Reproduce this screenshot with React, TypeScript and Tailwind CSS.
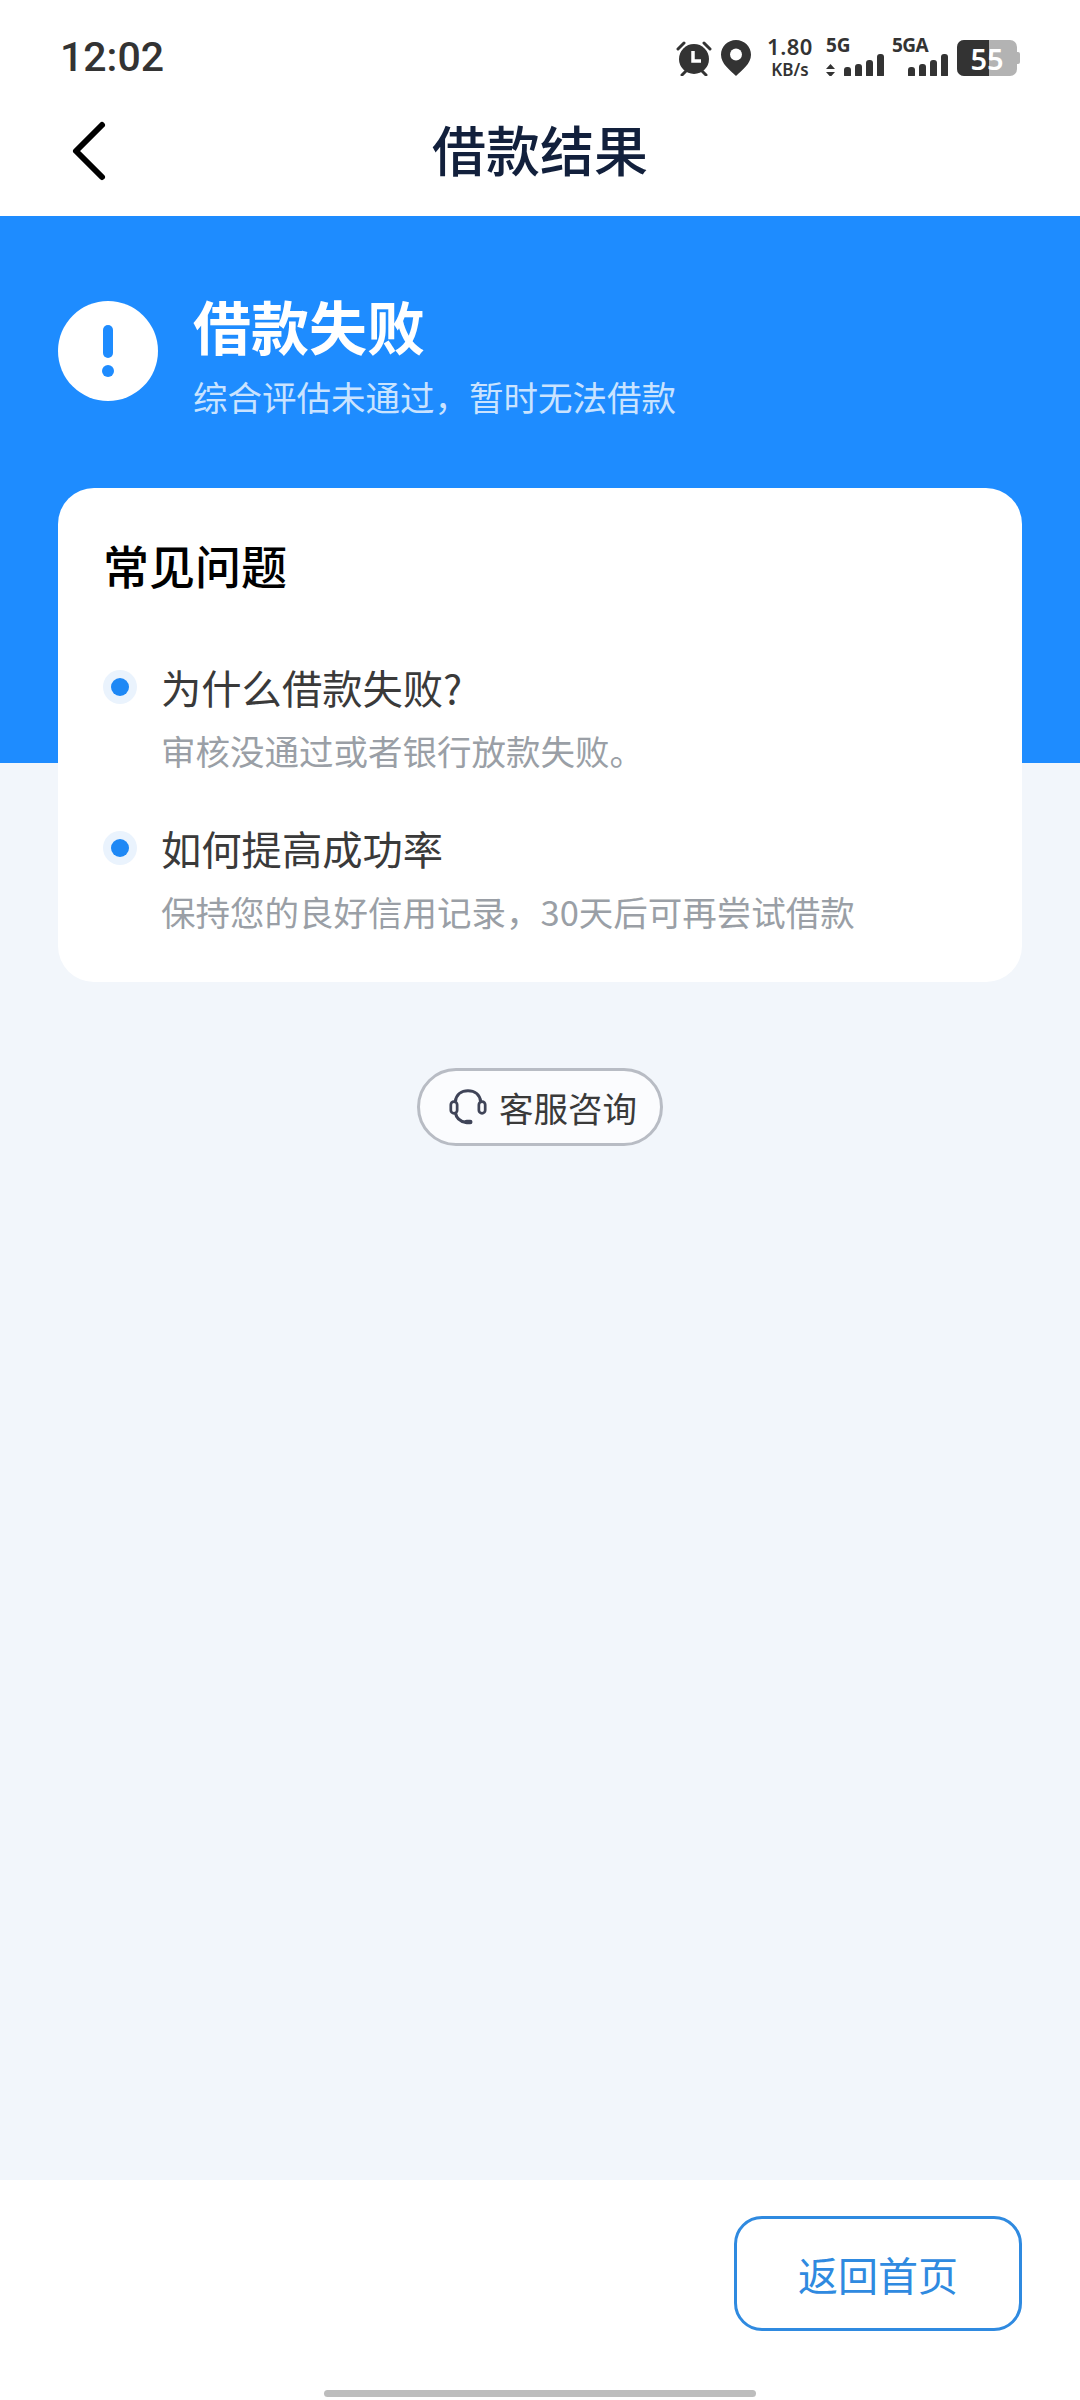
const cjk = "font-['Noto_Sans_CJK_SC','Noto_Sans',sans-serif]";

function SignalBars({ heights }: { heights: number[] }) {
  return (
    <div className="flex items-end gap-[4px]">
      {heights.map((h, i) => (
        <div key={i} className="w-[7px] rounded-[3px] bg-[#333333]" style={{ height: h }} />
      ))}
    </div>
  );
}

function StatusBar() {
  return (
    <div className="flex h-[76px] shrink-0 items-start justify-between bg-white px-[60px] text-[#333333]">
      <span className="mt-[33px] font-['Roboto',sans-serif] text-[41px] leading-[48px] font-medium">12:02</span>
      <div className="mt-[39px] flex h-[38px] items-center">
        <svg width="38" height="38" viewBox="0 0 38 38" className="mr-[8px]">
          <circle cx="19" cy="20" r="15" fill="#333333" />
          <path d="M3 10 9 4M35 10l-6-6M7 36l4-4M31 36l-4-4" stroke="#333333" strokeWidth="3" strokeLinecap="round" />
          <path d="M18 12v10h8" stroke="#fff" strokeWidth="3.5" fill="none" />
        </svg>
        <svg width="30" height="36" viewBox="0 0 30 36" className="mr-[15px]">
          <path d="M15 0C6.7 0 0 6.6 0 14.8 0 24 9 30 15 36c6-6 15-12 15-21.200C30 6.600 23.300 0 15 0Z" fill="#333333" />
          <circle cx="15" cy="14.500" r="6" fill="#fff" />
        </svg>
        <div className="mt-[-3px] mr-[12px] flex w-[48px] flex-col items-center font-['Noto_Sans',sans-serif] font-semibold">
          <span className="mb-[3px] text-[22px] leading-[22px] tracking-[0.5px]">1.80</span>
          <span className="text-[17px] leading-[19px]">KB/s</span>
        </div>
        <div className="mr-[8px] flex w-[58px] flex-col font-['Noto_Sans',sans-serif]">
          <span className="text-[19px] leading-[15px] font-bold">5G</span>
          <div className="mt-[1px] flex items-end justify-between">
            <svg width="9" height="13" viewBox="0 0 9 13" className="mb-[1px]">
              <path d="M4.500 0 9 5H0ZM4.500 13 0 8h9Z" fill="#333333" />
            </svg>
            <SignalBars heights={[11, 14, 18, 24]} />
          </div>
        </div>
        <div className="mr-[9px] flex w-[56px] flex-col font-['Noto_Sans',sans-serif]">
          <span className="text-[19px] leading-[15px] font-bold tracking-[-0.5px]">5GA</span>
          <div className="mt-[1px] flex justify-end">
            <SignalBars heights={[11, 14, 18, 24]} />
          </div>
        </div>
        <div className="relative flex h-[36px] w-[60px] items-center overflow-hidden rounded-[7px] bg-[#b3b3b3]">
          <div className="h-full w-[32px] bg-[#333333]" />
          <span className="absolute inset-0 flex items-center justify-center font-['Noto_Sans',sans-serif] text-[29px] leading-none font-semibold text-white">
            55
          </span>
        </div>
        <div className="h-[12px] w-[3px] rounded-r-[2px] bg-[#b3b3b3]" />
      </div>
    </div>
  );
}

function NavBar() {
  return (
    <div className="relative flex h-[140px] shrink-0 items-center justify-center bg-white pt-[6px]">
      <button className="absolute top-[44px] left-[70px]">
        <svg width="38" height="62" viewBox="0 0 38 62">
          <path d="M32 5 6 31l26 26" fill="none" stroke="#000" strokeWidth="6" strokeLinecap="round" strokeLinejoin="round" />
        </svg>
      </button>
      <span className="text-[54px] leading-none font-medium text-[#12203c]">借款结果</span>
    </div>
  );
}

function FaqItem({ question, answer }: { question: string; answer: string }) {
  return (
    <div>
      <div className="flex h-[50px] items-center">
        <div className="flex h-[34px] w-[34px] items-center justify-center rounded-full bg-[#eaf3fd]">
          <div className="h-[18px] w-[18px] rounded-full bg-[#1e88f5]" />
        </div>
        <span className="ml-[24px] text-[40.3px] leading-[50px] text-[#3a3a3a]">{question}</span>
      </div>
      <p className="mt-[16px] ml-[58px] text-[34.5px] leading-[44px] text-[#9a9fa6]">{answer}</p>
    </div>
  );
}

export default function App() {
  return (
    <div className={`${cjk} flex h-[2400px] w-[1080px] flex-col overflow-hidden bg-[#f2f6fb]`}>
      <StatusBar />
      <NavBar />

      <div className="flex h-[547px] shrink-0 items-start bg-[#1e8cff] pt-[85px] pl-[58px]">
        <div className="flex h-[100px] w-[100px] items-center justify-center rounded-full bg-white">
          <svg width="14" height="56" viewBox="0 0 14 56">
            <rect x="2" y="2" width="10" height="33" rx="5" fill="#1e8cff" />
            <circle cx="7" cy="48" r="6" fill="#1e8cff" />
          </svg>
        </div>
        <div className="ml-[35px] flex flex-col">
          <h1 className="mt-[-12px] text-[58px] leading-[72px] font-bold text-white">借款失败</h1>
          <p className="mt-[13px] text-[34.5px] leading-[44px] text-[#c9e3ff]">{"综合评估未通过\uFF0C暂时无法借款"}</p>
        </div>
      </div>

      <div className="mx-[58px] mt-[-275px] flex h-[494px] flex-col rounded-[36px] bg-white px-[45px] pt-[46px]">
        <h2 className="text-[46px] leading-[60px] font-medium text-[#000000]">常见问题</h2>
        <div className="mt-[68px] flex flex-col gap-[51px]">
          <FaqItem question="为什么借款失败?" answer="审核没通过或者银行放款失败。" />
          <FaqItem question="如何提高成功率" answer={"保持您的良好信用记录\uFF0C30天后可再尝试借款"} />
        </div>
      </div>

      <div className="mt-[86px] flex justify-center">
        <button className="flex h-[78px] w-[246px] items-center justify-center rounded-full border-[3px] border-[#b8bcc4] bg-[#fbfcfe] pl-[6px]">
          <svg width="38" height="40" viewBox="0 0 42 40" fill="none" className="mr-[12px]">
            <path d="M7 14C8 6 14 2 21 2s13 4 14 12" stroke="#3f4458" strokeWidth="3.500" />
            <path d="M7 26c1 6 5 10 12 11" stroke="#3f4458" strokeWidth="3.500" />
            <rect x="2" y="14" width="7" height="13" rx="3.500" stroke="#3f4458" strokeWidth="3" />
            <rect x="33" y="14" width="7" height="13" rx="3.500" stroke="#3f4458" strokeWidth="3" />
            <rect x="17" y="34" width="9" height="5" rx="2.500" fill="#3f4458" />
          </svg>
          <span className="text-[34.5px] leading-none text-[#3a3a3a]">客服咨询</span>
        </button>
      </div>

      <div className="mt-auto flex h-[220px] shrink-0 flex-col bg-white">
        <div className="mt-[36px] flex justify-end pr-[58px]">
          <button className="flex h-[115px] w-[288px] items-center justify-center rounded-[28px] border-[3px] border-[#2f8ae0] text-[40px] leading-none text-[#2f8ae0]">
            返回首页
          </button>
        </div>
        <div className="mx-auto mt-[59px] h-[7px] w-[432px] rounded-full bg-[#bdbdbd]" />
      </div>
    </div>
  );
}
